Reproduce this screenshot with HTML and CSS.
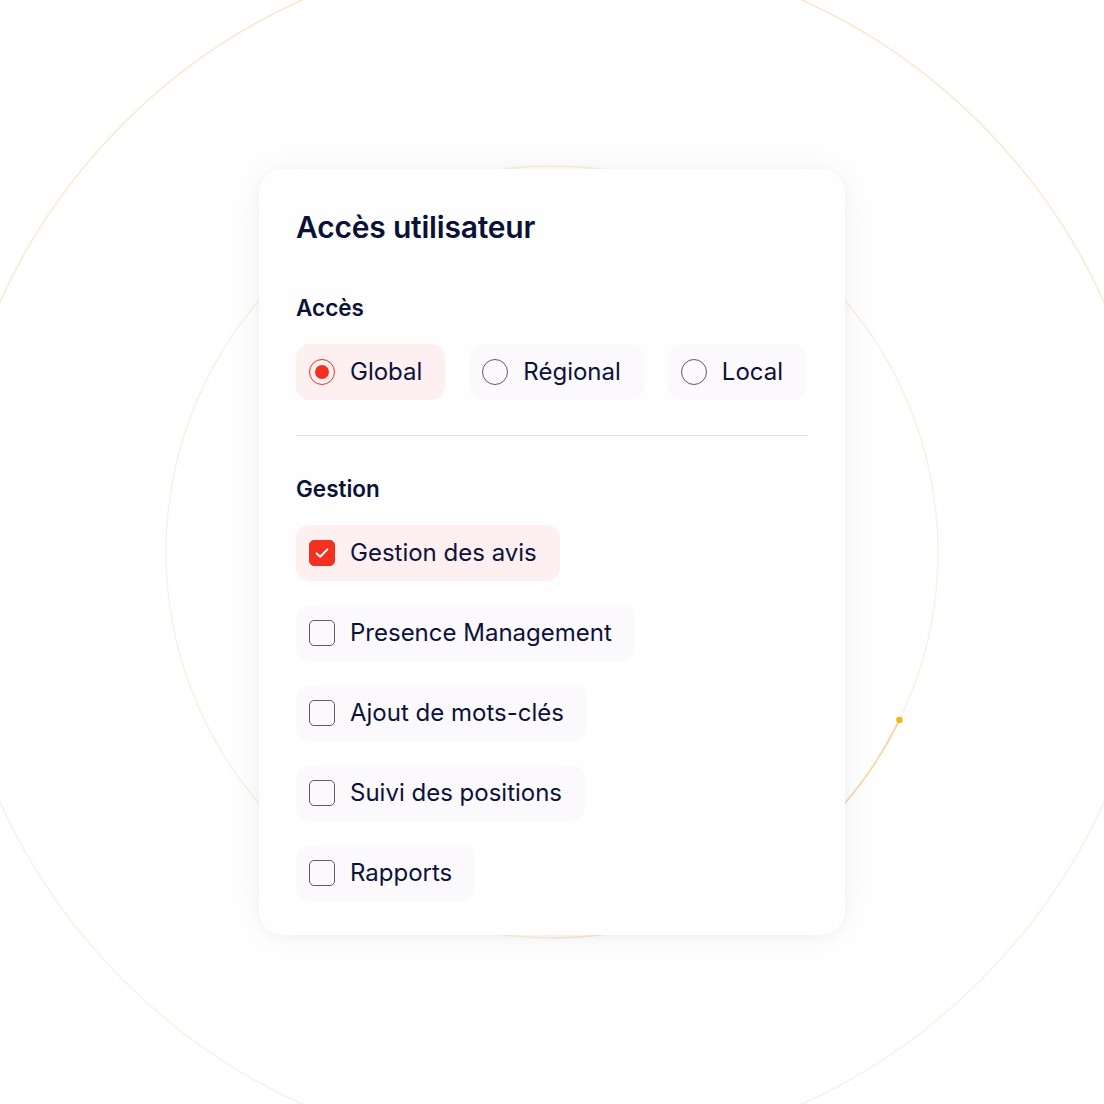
FILE: index.html
```html
<!DOCTYPE html>
<html lang="fr">
<head>
<meta charset="utf-8">
<title>Accès utilisateur</title>
<link rel="stylesheet" href="styles.css">
</head>
<body>
<div class="stage">
  <svg class="rings" width="1104" height="1104" viewBox="0 0 1104 1104" aria-hidden="true">
    <defs>
      <linearGradient id="trail" x1="900" y1="720" x2="700" y2="900" gradientUnits="userSpaceOnUse">
        <stop offset="0" stop-color="#f9c98f" stop-opacity="1"/>
        <stop offset="1" stop-color="#fde4c6" stop-opacity="0.6"/>
      </linearGradient>
      <linearGradient id="outer" x1="0" y1="0" x2="0" y2="1104" gradientUnits="userSpaceOnUse">
        <stop offset="0" stop-color="#fde2c2"/>
        <stop offset="0.6" stop-color="#fdeedd"/>
        <stop offset="1" stop-color="#fbeee4"/>
      </linearGradient>
    </defs>
    <circle cx="552" cy="552" r="606" fill="none" stroke="url(#outer)" stroke-width="1.3"/>
    <circle cx="552" cy="552" r="386" fill="none" stroke="#fdeedd" stroke-width="1.3"/>
    <path d="M 899.4 719.9 A 386 386 0 0 1 552 938" fill="none" stroke="url(#trail)" stroke-width="1.5"/>
    <circle cx="899.4" cy="719.9" r="3.2" fill="#f7b60f"/>
  </svg>

  <section class="card">
    <h1 class="title">Accès utilisateur</h1>

    <h2 class="label">Accès</h2>
    <div class="options">
      <div class="pill pill--on"><span class="radio radio--on"></span><span class="pill-text">Global</span></div>
      <div class="pill"><span class="radio"></span><span class="pill-text">Régional</span></div>
      <div class="pill"><span class="radio"></span><span class="pill-text">Local</span></div>
    </div>

    <hr class="divider">

    <h2 class="label">Gestion</h2>
    <div class="checks">
      <div class="pill pill--on">
        <span class="check check--on">
          <svg width="18" height="18" viewBox="0 0 18 18"><path d="M3.6 9.4 L7.2 12.8 L14.4 5.4" fill="none" stroke="#fff" stroke-width="2" stroke-linecap="round" stroke-linejoin="round"/></svg>
        </span>
        <span class="pill-text">Gestion des avis</span>
      </div>
      <div class="pill"><span class="check"></span><span class="pill-text">Presence Management</span></div>
      <div class="pill"><span class="check"></span><span class="pill-text">Ajout de mots-clés</span></div>
      <div class="pill"><span class="check"></span><span class="pill-text">Suivi des positions</span></div>
      <div class="pill"><span class="check"></span><span class="pill-text">Rapports</span></div>
    </div>
  </section>
</div>
</body>
</html>
```

FILE: styles.css
```css
* { box-sizing: border-box; }

html, body {
  margin: 0;
  padding: 0;
  background: #ffffff;
}

body {
  font-family: "Inter", "Noto Sans", "Liberation Sans", sans-serif;
  color: #0c123a;
}

.stage {
  position: relative;
  width: 1104px;
  height: 1104px;
  display: flex;
  align-items: center;
  justify-content: center;
  overflow: hidden;
}

.rings {
  position: absolute;
  left: 0;
  top: 0;
}

.card {
  position: relative;
  width: 586px;
  padding: 40px 37px 34px 37px;
  background: #fefefe;
  border-radius: 24px;
  box-shadow: 0 0 40px rgba(20, 20, 40, 0.06), 0 2px 10px rgba(20, 20, 40, 0.03);
  display: flex;
  flex-direction: column;
  align-items: flex-start;
}

.title {
  margin: 0;
  font-size: 30px;
  line-height: 36px;
  font-weight: 600;
  letter-spacing: -0.2px;
  color: #0b1238;
}

.label {
  margin: 49px 0 22px 0;
  font-size: 22.5px;
  line-height: 28px;
  font-weight: 600;
  color: #0b1238;
}

.divider + .label {
  margin-top: 39px;
}

.options {
  display: flex;
  gap: 24px;
}

.checks {
  display: flex;
  flex-direction: column;
  align-items: flex-start;
  gap: 24px;
}

.pill {
  height: 56px;
  display: inline-flex;
  align-items: center;
  gap: 15px;
  padding: 0 23px 0 13px;
  border-radius: 14px;
  background: #fbf9fc;
}

.pill--on {
  background: #fef0f0;
}

.pill-text {
  font-size: 24px;
  line-height: 28px;
  font-weight: 400;
  color: #0c123a;
}

.radio {
  width: 26px;
  height: 26px;
  border-radius: 50%;
  border: 1.5px solid #5c5c66;
  display: flex;
  align-items: center;
  justify-content: center;
  flex: none;
}

.radio--on {
  border-color: #f2311f;
}

.radio--on::after {
  content: "";
  width: 14px;
  height: 14px;
  border-radius: 50%;
  background: #f2311f;
}

.check {
  width: 26px;
  height: 26px;
  border-radius: 5px;
  border: 1.5px solid #5c5c66;
  display: flex;
  align-items: center;
  justify-content: center;
  flex: none;
}

.check--on {
  background: #f2311f;
  border-color: #f2311f;
}

.divider {
  align-self: stretch;
  margin: 35px 0 0 0;
  border: 0;
  height: 1px;
  background: #e4e4e6;
}
```
